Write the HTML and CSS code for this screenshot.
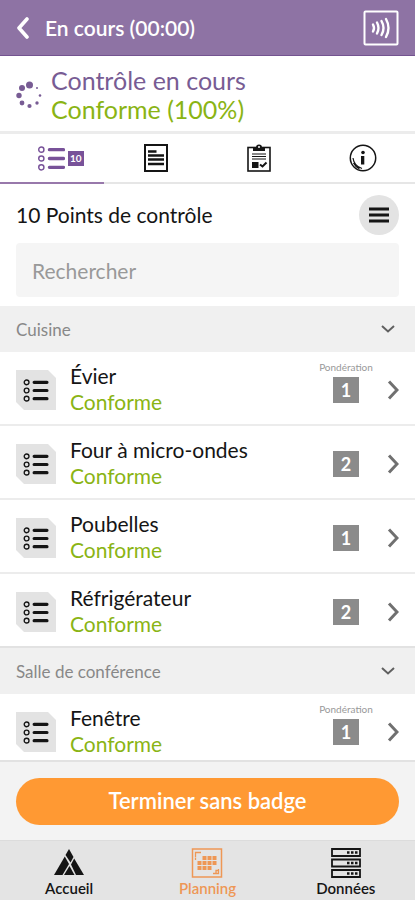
FILE: index.html
```html
<!DOCTYPE html>
<html lang="fr">
<head>
    <meta charset="UTF-8">
    <meta name="viewport" content="width=device-width, initial-scale=1.0">
    <title>Contrôle en cours</title>
    <link rel="stylesheet" href="styles.css">
</head>
<body>

    <!-- Shared icons -->
    <svg class="sprite" aria-hidden="true">
        <symbol id="icon-list" viewBox="0 0 26 24">
            <g fill="none" stroke="currentColor" stroke-width="1.4">
                <circle cx="3.2" cy="3.5" r="2.5"/>
                <circle cx="3.2" cy="12" r="2.5"/>
                <circle cx="3.2" cy="20.5" r="2.5"/>
            </g>
            <path d="M11 3.5h13.5M11 12h13.5M11 20.5h13.5" stroke="currentColor" stroke-width="3.2" stroke-linecap="round"/>
        </symbol>
        <symbol id="icon-next" viewBox="0 0 12 20">
            <path d="M2 1.5l8 8.5-8 8.5" fill="none" stroke="currentColor" stroke-width="3"/>
        </symbol>
        <symbol id="icon-down" viewBox="0 0 14 8">
            <path d="M1 1l6 5.5L13 1" fill="none" stroke="currentColor" stroke-width="2"/>
        </symbol>
    </svg>

    <header class="topbar">
        <button class="back" type="button" aria-label="Retour">
            <svg width="13" height="22" viewBox="0 0 13 22"><path d="M11 2L3 11l8 9" fill="none" stroke="currentColor" stroke-width="3.6" stroke-linecap="round" stroke-linejoin="round"/></svg>
        </button>
        <h1>En cours (00:00)</h1>
        <button class="nfc" type="button" aria-label="Scanner un badge">
            <svg width="36" height="36" viewBox="0 0 36 36" fill="none" stroke="currentColor">
                <rect x="1.5" y="1.5" width="33" height="33" rx="1" stroke-width="2"/>
                <g stroke-width="2.4" stroke-linecap="round">
                    <path d="M10 14.500q2 3.500 0 7"/>
                    <path d="M14 12.500q3 5.500 0 11"/>
                    <path d="M18.500 11q4 7 0 14"/>
                    <path d="M23 9q5 9 0 18"/>
                </g>
            </svg>
        </button>
    </header>

    <section class="status">
        <svg width="26" height="28" viewBox="0 0 26 28" fill="currentColor">
            <circle cx="13.500" cy="4" r="3.500"/>
            <circle cx="6" cy="7" r="3"/>
            <circle cx="3" cy="14.500" r="2.700"/>
            <circle cx="6" cy="22" r="2.400"/>
            <circle cx="13.500" cy="25" r="2.100"/>
            <circle cx="21" cy="22" r="1.700"/>
            <circle cx="24" cy="14.500" r="1.300"/>
            <circle cx="21" cy="7" r="1"/>
        </svg>
        <div>
            <h2>Contrôle en cours</h2>
            <p class="ok">Conforme (100%)</p>
        </div>
    </section>

    <nav class="tabs">
        <button class="tab active" type="button" aria-label="Points de contrôle, 10">
            <svg width="27" height="25"><use href="#icon-list"/></svg>
            <span class="count">10</span>
        </button>
        <button class="tab" type="button" aria-label="Rapport">
            <svg width="26" height="28" viewBox="0 0 26 28">
                <rect x="2" y="1" width="22" height="26" fill="none" stroke="currentColor" stroke-width="2"/>
                <path d="M5 7.500h8.500M5 11.500h16M5 15.500h16M5 20h16" stroke="currentColor" stroke-width="2.300"/>
            </svg>
        </button>
        <button class="tab" type="button" aria-label="Tâches">
            <svg width="24" height="28" viewBox="0 0 24 28">
                <rect x="1" y="3.500" width="22" height="23.500" fill="none" stroke="currentColor" stroke-width="1.600"/>
                <path d="M6 7V3.500h3a3 3 0 0 1 6 0h3V7z" fill="currentColor"/>
                <circle cx="12" cy="3" r="1" fill="#fff"/>
                <path d="M5 10h14M5 12.500h14M5 15h14" stroke="currentColor" stroke-width="1.200"/>
                <rect x="5" y="18" width="6.500" height="6" fill="currentColor"/>
                <path d="M13 20.500l2.500 2 4-4" fill="none" stroke="currentColor" stroke-width="2"/>
            </svg>
        </button>
        <button class="tab" type="button" aria-label="Informations">
            <svg width="28" height="28" viewBox="0 0 28 28">
                <circle cx="14" cy="14" r="12.700" fill="none" stroke="currentColor" stroke-width="1.500"/>
                <path d="M4 14q1 8 9 10.500M4.500 19q2 4 6 6" fill="none" stroke="currentColor" stroke-width="1.200"/>
                <circle cx="14" cy="8.500" r="1.800" fill="currentColor"/>
                <path d="M12 12h3.300v8.500H12z" fill="currentColor"/>
            </svg>
        </button>
    </nav>

    <main class="points">
        <div class="points-head">
            <h3>10 Points de contrôle</h3>
            <button class="menu" type="button" aria-label="Menu">
                <svg width="20" height="16" viewBox="0 0 20 16"><path d="M0 2h20M0 8h20M0 14h20" stroke="currentColor" stroke-width="2.800"/></svg>
            </button>
        </div>
        <div class="search">
            <input type="search" placeholder="Rechercher" aria-label="Rechercher">
        </div>

        <button class="group" type="button" aria-expanded="true">
            Cuisine
            <svg width="14" height="8"><use href="#icon-down"/></svg>
        </button>
        <ul>
            <li><a class="point" href="#evier">
                <span class="thumb"><svg width="26" height="23"><use href="#icon-list"/></svg></span>
                <span class="name">Évier<br><span class="ok">Conforme</span></span>
                <span class="weight labelled"><small>Pondération</small><b>1</b></span>
                <svg width="12" height="20"><use href="#icon-next"/></svg>
            </a></li>
            <li><a class="point" href="#four">
                <span class="thumb"><svg width="26" height="23"><use href="#icon-list"/></svg></span>
                <span class="name">Four à micro-ondes<br><span class="ok">Conforme</span></span>
                <span class="weight"><b>2</b></span>
                <svg width="12" height="20"><use href="#icon-next"/></svg>
            </a></li>
            <li><a class="point" href="#poubelles">
                <span class="thumb"><svg width="26" height="23"><use href="#icon-list"/></svg></span>
                <span class="name">Poubelles<br><span class="ok">Conforme</span></span>
                <span class="weight"><b>1</b></span>
                <svg width="12" height="20"><use href="#icon-next"/></svg>
            </a></li>
            <li><a class="point" href="#refrigerateur">
                <span class="thumb"><svg width="26" height="23"><use href="#icon-list"/></svg></span>
                <span class="name">Réfrigérateur<br><span class="ok">Conforme</span></span>
                <span class="weight"><b>2</b></span>
                <svg width="12" height="20"><use href="#icon-next"/></svg>
            </a></li>
        </ul>

        <button class="group" type="button" aria-expanded="true">
            Salle de conférence
            <svg width="14" height="8"><use href="#icon-down"/></svg>
        </button>
        <ul>
            <li><a class="point" href="#fenetre">
                <span class="thumb"><svg width="26" height="23"><use href="#icon-list"/></svg></span>
                <span class="name">Fenêtre<br><span class="ok">Conforme</span></span>
                <span class="weight labelled"><small>Pondération</small><b>1</b></span>
                <svg width="12" height="20"><use href="#icon-next"/></svg>
            </a></li>
        </ul>
    </main>

    <div class="action">
        <button type="button">Terminer sans badge</button>
    </div>

    <nav class="bottom-nav">
        <a href="#accueil">
            <svg width="32" height="30" viewBox="0 0 32 30" fill="currentColor">
                <path d="M16 1l4.500 8-3 5.500-5-7.500z"/>
                <path d="M11.800 8.500l4.200 7.500-6.500 11H1z"/>
                <path d="M16.500 18l5 9H11z"/>
                <path d="M21.200 10.500L31 27h-8l-5-10.500z"/>
            </svg>
            Accueil
        </a>
        <a class="current" href="#planning">
            <svg width="32" height="30" viewBox="0 0 32 30">
                <rect x="1.500" y="1" width="29" height="28" fill="none" stroke="currentColor" stroke-width="1.500"/>
                <path d="M4.500 9V4.500H10M27.500 21v4.500H22M4.500 12V9.500M25 25.500v-3h2.500" fill="none" stroke="currentColor" stroke-width="1.300"/>
                <path d="M11.500 8h4v4h-4zM16.500 8h4v4h-4zM21.500 8h4v4h-4zM6.500 13h4v4h-4zM11.500 13h4v4h-4zM16.500 13h4v4h-4zM21.500 13h4v4h-4zM6.500 18h4v4h-4zM11.500 18h4v4h-4zM16.500 18h4v4h-4z" fill="currentColor"/>
            </svg>
            Planning
        </a>
        <a href="#donnees">
            <svg width="32" height="30" viewBox="0 0 32 30">
                <path d="M2 1h28v7H2zM2 11.500h28v7H2zM2 22h28v7H2z" fill="none" stroke="currentColor" stroke-width="1.800"/>
                <path d="M17 4.500h11M17 15h11M17 25.500h11" stroke="currentColor" stroke-width="2.400" stroke-dasharray="2.500 1.500"/>
            </svg>
            Données
        </a>
    </nav>

</body>
</html>
```
FILE: styles.css
```css
* {
    box-sizing: border-box;
    margin: 0;
    padding: 0;
}

body {
    font-family: Lato, sans-serif;
    font-size: 21px;
    color: #151515;
    background: #fff;
    height: 100vh;
    display: flex;
    flex-direction: column;
}

button,
input {
    font: inherit;
    color: inherit;
    background: none;
    border: none;
}

button {
    cursor: pointer;
}

a {
    color: inherit;
    text-decoration: none;
}

ul {
    list-style: none;
}

svg {
    display: block;
    flex: none;
}

h1, h2, h3 {
    font-size: 21px;
    font-weight: 400;
}

.sprite {
    position: absolute;
    width: 0;
    height: 0;
}

.ok {
    color: #8ab414;
}

.topbar {
    flex: none;
    display: flex;
    align-items: center;
    gap: 16px;
    height: 56px;
    padding: 0 16px;
    color: #fff;
    background: #8e73a4;
    border-bottom: 1px solid #745390;
}

.topbar h1 {
    flex: 1;
    font-weight: 600;
}

.status {
    flex: none;
    display: flex;
    align-items: center;
    gap: 9px;
    padding: 10px 16px 7px;
    color: #785c94;
    border-bottom: 3px solid #ececec;
}

.status h2,
.status p {
    font-size: 25px;
    line-height: 29px;
}

.tabs {
    flex: none;
    display: flex;
    height: 50px;
}

.tab {
    width: 25%;
    display: flex;
    align-items: center;
    justify-content: center;
    gap: 3px;
    border-bottom: 2px solid #e6e6e6;
}

.tab.active {
    color: #785299;
    padding-left: 18px;
    border-bottom-color: #9878ab;
}

.count {
    padding: 0 2px;
    font-size: 10px;
    font-weight: 700;
    line-height: 15px;
    color: #fff;
    background: #785299;
}

.points {
    flex: 1;
    min-height: 0;
    overflow: hidden;
}

.points-head {
    display: flex;
    align-items: center;
    justify-content: space-between;
    height: 59px;
    padding: 2px 16px 0;
}

.menu {
    display: flex;
    align-items: center;
    justify-content: center;
    width: 40px;
    height: 40px;
    border-radius: 50%;
    background: #e3e3e3;
}

.search {
    padding: 0 16px 9px;
}

.search input {
    display: block;
    width: 100%;
    height: 54px;
    padding: 0 16px;
    border-radius: 4px;
    background: #f5f5f5;
}

.search input::placeholder {
    color: #999;
    opacity: 1;
}

.group {
    display: flex;
    align-items: center;
    justify-content: space-between;
    width: 100%;
    height: 46px;
    padding: 0 20px 0 16px;
    font-size: 17px;
    color: #888;
    background: #f0f0f0;
}

.group svg {
    color: #606060;
}

ul + .group {
    height: 48px;
    border-top: 2px solid #e2e2e2;
}

.point {
    display: flex;
    align-items: center;
    gap: 14px;
    height: 74px;
    padding: 4px 16px 0;
    border-bottom: 2px solid #ececec;
}

li:last-child .point {
    height: 72px;
    border-bottom: none;
}

.point > svg {
    color: #707070;
}

.thumb {
    display: flex;
    align-items: center;
    justify-content: center;
    width: 40px;
    height: 40px;
    background: #e3e3e3;
    clip-path: polygon(0 0, 80% 0, 100% 20%, 100% 100%, 20% 100%, 0 80%);
}

.name {
    flex: 1;
    padding-bottom: 2px;
    line-height: 26px;
}

.weight {
    display: flex;
    flex-direction: column;
    align-items: center;
    width: 54px;
}

.weight small {
    font-size: 10px;
    line-height: 12px;
    padding-bottom: 4px;
    color: #999;
}

.weight b {
    width: 26px;
    font-size: 18px;
    line-height: 26px;
    text-align: center;
    color: #fff;
    background: #8b8b8b;
}

.weight.labelled {
    padding-bottom: 16px;
}

.action {
    flex: none;
    padding: 16px 16px 15px;
    background: #f3f3f3;
    border-top: 2px solid #e2e2e2;
}

.action button {
    width: 100%;
    height: 47px;
    padding-bottom: 2px;
    border-radius: 24px;
    font-size: 22px;
    font-weight: 600;
    color: #fff;
    background: #ff9933;
}

.bottom-nav {
    flex: none;
    display: flex;
    height: 60px;
    font-size: 15px;
    font-weight: 600;
    line-height: 20px;
    background: #e4e4e4;
    border-top: 1px solid #dcdcdc;
}

.bottom-nav a {
    flex: 1;
    display: flex;
    flex-direction: column;
    align-items: center;
    padding-top: 7px;
}

.bottom-nav .current {
    color: #ee9755;
}
```
